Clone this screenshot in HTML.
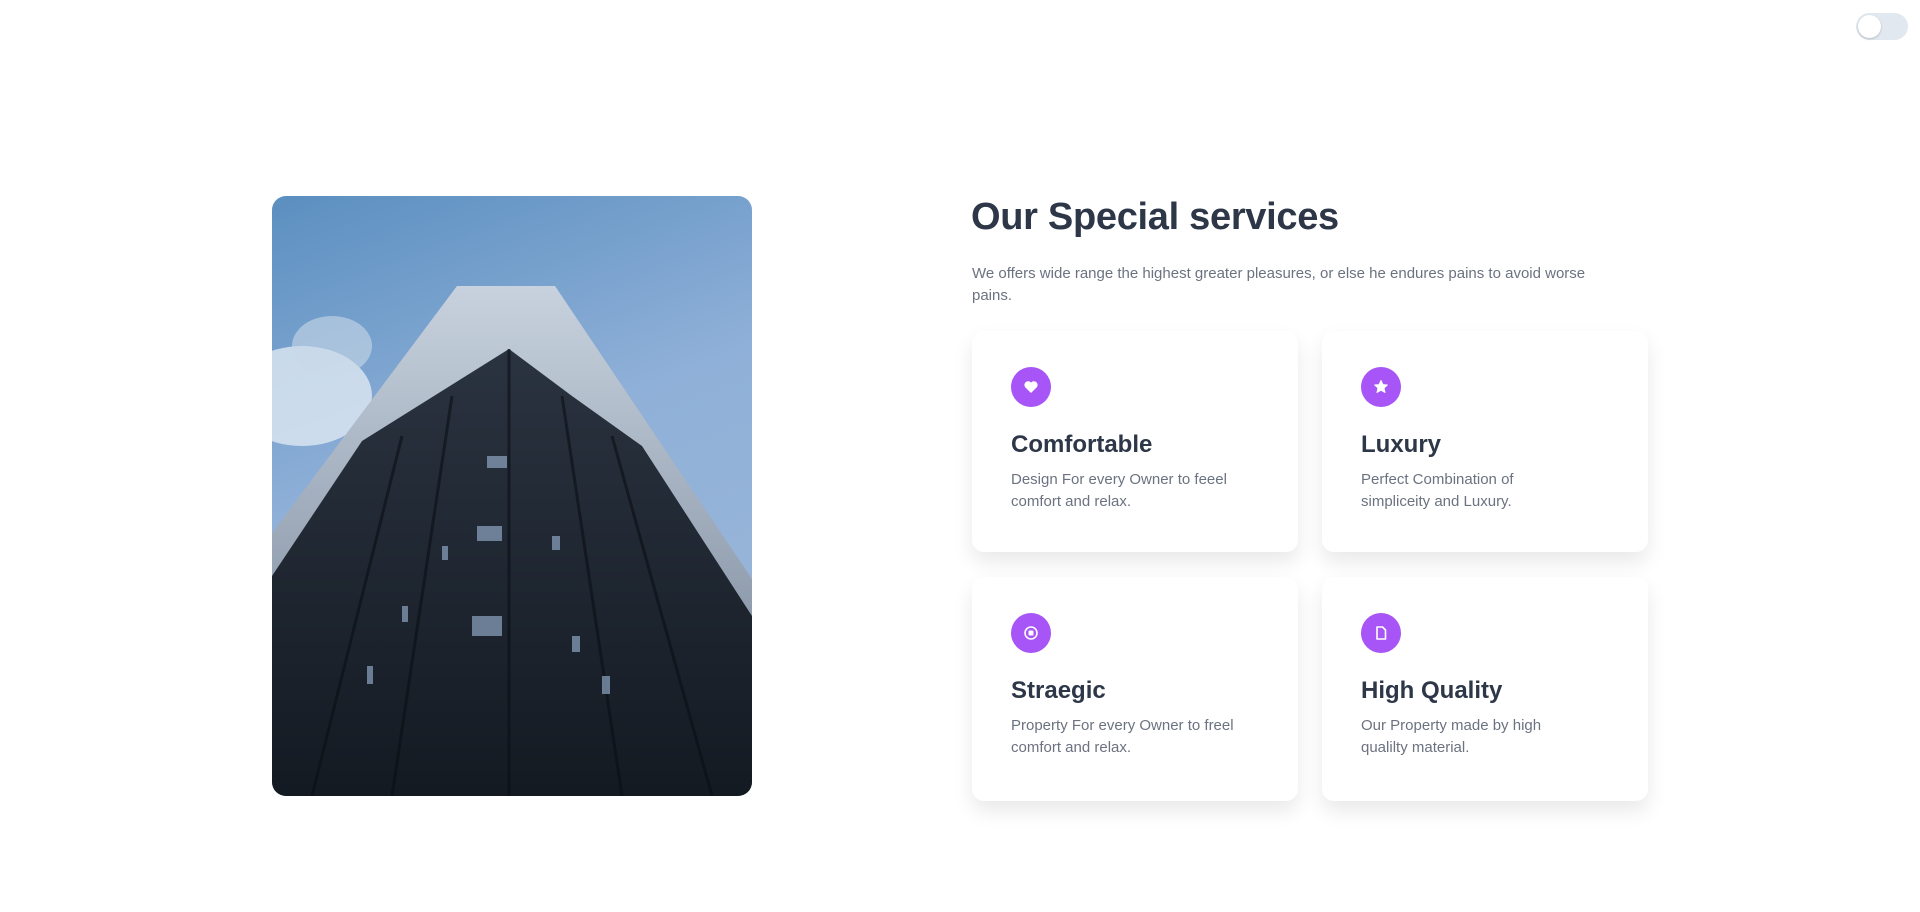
<!DOCTYPE html>
<html><head><meta charset="utf-8"><style>
*{margin:0;padding:0;box-sizing:border-box}
body{width:1920px;height:912px;background:#fff;font-family:"Liberation Sans",sans-serif;position:relative;overflow:hidden}
.toggle{position:absolute;left:1856px;top:13px;width:52px;height:27px;border-radius:14px;background:#e2e8f0}
.toggle::after{content:"";position:absolute;left:2px;top:2px;width:23px;height:23px;border-radius:50%;background:#fff;box-shadow:0 1px 2px rgba(0,0,0,.2)}
.img{position:absolute;left:272px;top:196px;width:480px;height:600px;border-radius:14px;overflow:hidden}
h1{position:absolute;left:971px;top:196px;font-size:38px;font-weight:600;color:#2d3748;letter-spacing:-0.3px}
.lead{position:absolute;left:972px;top:263px;font-size:15px;line-height:22px;color:#6b7280;width:700px}
.card{position:absolute;width:326px;background:#fff;border-radius:12px;box-shadow:0 10px 20px rgba(0,0,0,.09)}
.ic{position:absolute;left:39px;top:36px;width:40px;height:40px;border-radius:50%;background:#a855f7;display:flex;align-items:center;justify-content:center}
.card h3{position:absolute;left:39px;top:100px;font-size:24px;font-weight:600;color:#2d3748}
.card p{position:absolute;left:39px;top:138px;font-size:15px;line-height:22px;color:#6b7280;width:280px}
</style></head><body>
<div class="toggle"></div>
<div class="img">
<svg width="480" height="600" viewBox="0 0 480 600">
<defs>
<linearGradient id="sky" x1="0" y1="0" x2="0.3" y2="1"><stop offset="0" stop-color="#5b8fc0"/><stop offset="0.5" stop-color="#8fb0d8"/><stop offset="1" stop-color="#9ab6d8"/></linearGradient>
<linearGradient id="tw" x1="0" y1="0" x2="0" y2="1"><stop offset="0" stop-color="#c8d2de"/><stop offset="1" stop-color="#6f7e92"/></linearGradient>
<linearGradient id="dk" x1="0" y1="0" x2="0" y2="1"><stop offset="0" stop-color="#2a3340"/><stop offset="1" stop-color="#141a22"/></linearGradient>
</defs>
<rect width="480" height="600" fill="url(#sky)"/>
<ellipse cx="30" cy="200" rx="70" ry="50" fill="#dfe8f2" opacity=".8"/>
<ellipse cx="60" cy="150" rx="40" ry="30" fill="#c9d8e8" opacity=".6"/>
<polygon points="185,90 283,90 480,383 480,600 0,600 0,337" fill="url(#tw)"/>
<polygon points="237,153 300,200 370,250 480,420 480,600 0,600 0,380 90,245" fill="url(#dk)"/>
<g stroke="#0b0f15" stroke-width="3" opacity=".6">
<line x1="237" y1="153" x2="237" y2="600"/><line x1="180" y1="200" x2="120" y2="600"/><line x1="290" y1="200" x2="350" y2="600"/><line x1="130" y1="240" x2="40" y2="600"/><line x1="340" y1="240" x2="440" y2="600"/>
</g>
<g fill="#8ea5c2" opacity=".7">
<rect x="215" y="260" width="20" height="12"/><rect x="205" y="330" width="25" height="15"/><rect x="200" y="420" width="30" height="20"/><rect x="280" y="340" width="8" height="14"/><rect x="300" y="440" width="8" height="16"/><rect x="330" y="480" width="8" height="18"/><rect x="170" y="350" width="6" height="14"/><rect x="130" y="410" width="6" height="16"/><rect x="95" y="470" width="6" height="18"/>
</g>
</svg>
</div>
<h1>Our Special services</h1>
<div class="lead">We offers wide range the highest greater pleasures, or else he endures pains to avoid worse<br>pains.</div>

<div class="card" style="left:972px;top:331px;height:221px">
<div class="ic"><svg width="16" height="16" viewBox="0 0 16 16"><path d="M8 14 L2.2 8.2 A3.3 3.3 0 0 1 8 3.6 A3.3 3.3 0 0 1 13.8 8.2 Z" fill="#fff"/></svg></div>
<h3>Comfortable</h3><p>Design For every Owner to feeel<br>comfort and relax.</p></div>

<div class="card" style="left:1322px;top:331px;height:221px">
<div class="ic"><svg width="16" height="16" viewBox="0 0 16 16"><path d="M8 1.5 L9.9 5.6 L14.3 6 L11 9 L12 13.5 L8 11.2 L4 13.5 L5 9 L1.7 6 L6.1 5.6 Z" fill="#fff" stroke="#fff" stroke-linejoin="round"/></svg></div>
<h3>Luxury</h3><p>Perfect Combination of<br>simpliceity and Luxury.</p></div>

<div class="card" style="left:972px;top:577px;height:224px">
<div class="ic"><svg width="16" height="16" viewBox="0 0 16 16"><circle cx="8" cy="8" r="6" fill="none" stroke="#fff" stroke-width="1.6"/><rect x="5.5" y="5.5" width="5" height="5" rx="1" fill="#fff"/></svg></div>
<h3>Straegic</h3><p>Property For every Owner to freel<br>comfort and relax.</p></div>

<div class="card" style="left:1322px;top:577px;height:224px">
<div class="ic"><svg width="16" height="16" viewBox="0 0 16 16"><path d="M4 2 H9.5 L12.5 5 V14 H4 Z" fill="none" stroke="#fff" stroke-width="1.6" stroke-linejoin="round"/></svg></div>
<h3>High Quality</h3><p>Our Property made by high<br>qualilty material.</p></div>
</body></html>
